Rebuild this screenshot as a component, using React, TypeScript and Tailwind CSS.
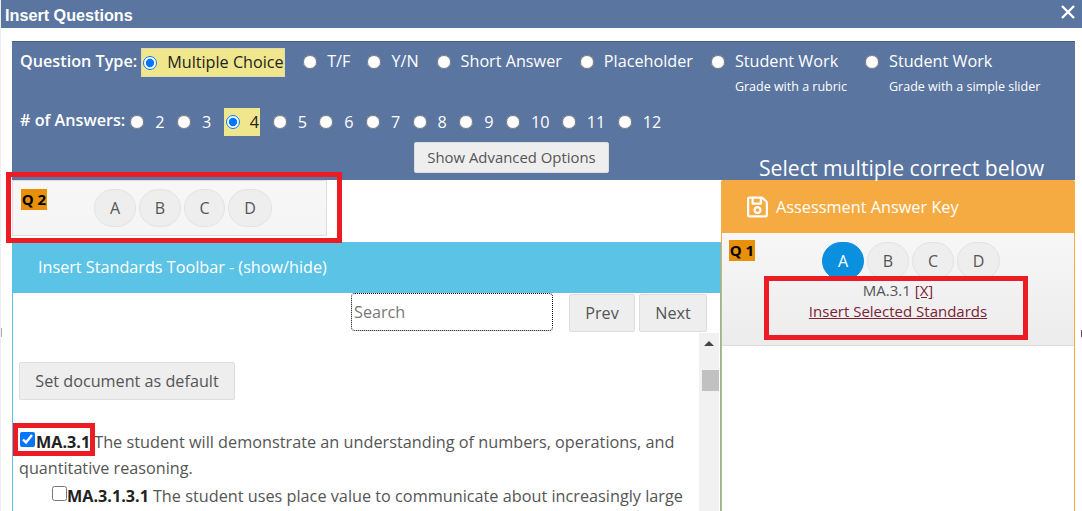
import React from "react";
import { FaRegSave } from "react-icons/fa";

const answerCounts = ["2", "3", "4", "5", "6", "7", "8", "9", "10", "11", "12"];
const letters = ["A", "B", "C", "D"];

function Radio({ checked, name }: { checked?: boolean; name: string }) {
  return (
    <input
      type="radio"
      name={name}
      defaultChecked={checked}
      className="m-0 w-[14px] h-[14px] shrink-0"
    />
  );
}

function TypeOption({
  label,
  sub,
  className,
}: {
  label: string;
  sub?: string;
  className: string;
}) {
  return (
    <div className={className}>
      <div className="flex items-center h-[29px]">
        <Radio name="qtype" />
        <span className="ml-[10px]">{label}</span>
      </div>
      {sub && <div className="ml-[24px] text-[12.5px] leading-[17px] mt-[2px]">{sub}</div>}
    </div>
  );
}

function LetterButtons({ active, widths }: { active?: string; widths: string[] }) {
  return (
    <div className="flex gap-[3px]">
      {letters.map((l, i) => (
        <div
          key={l}
          className={
            "h-[38px] rounded-full border flex items-center justify-center text-[16px] " +
            widths[i] +
            (l === active
              ? " bg-[#0b8fdf] border-[#0b8fdf] text-white"
              : " bg-[#eeeeee] border-[#e3e3e3] text-[#555]")
          }
        >
          {l}
        </div>
      ))}
    </div>
  );
}

function Badge({ text }: { text: string }) {
  return (
    <div className="bg-[#e8900a] text-black font-bold text-[15px] leading-[20px] h-[21px] w-[26px] text-center whitespace-nowrap">
      {text}
    </div>
  );
}

function GrayButton({ children, className }: { children: React.ReactNode; className: string }) {
  return (
    <div
      className={
        "bg-[#eeeeee] border border-[#dddddd] rounded-[2px] text-[#555] flex items-center justify-center " +
        className
      }
    >
      {children}
    </div>
  );
}

function RedBox({ className }: { className: string }) {
  return <div className={"absolute border-[5px] border-[#ed1c24] pointer-events-none " + className} />;
}

export default function App() {
  return (
    <div
      className="relative h-[511px] w-[1082px] overflow-hidden flex flex-col bg-white border-l border-[#eeeeee]"
      style={{ fontFamily: '"Open Sans", sans-serif' }}
    >
      {/* title bar */}
      <div className="h-[28px] shrink-0 bg-[#5a759f] flex items-center justify-between pl-[4px] pr-[4px]">
        <span
          className="text-white font-bold text-[16.2px] pt-[2px]"
          style={{ fontFamily: '"Liberation Sans", sans-serif' }}
        >
          Insert Questions
        </span>
        <svg width="16" height="16" viewBox="0 0 16 16" className="mb-[5px] mr-[2px]">
          <path d="M2 2 L14 14 M14 2 L2 14" stroke="#fff" strokeWidth="2.4" />
        </svg>
      </div>

      <div className="flex-1 flex flex-col pt-[13px] pl-[11px] pr-[7px] min-h-0">
        {/* question options */}
        <div className="h-[139px] shrink-0 bg-[#5a759f] border-t border-[#4a5f80] text-white text-[16.2px] pl-[8px] relative">
          <div className="flex items-start pt-[6px] h-[66px]">
            <span className="font-semibold h-[27px] flex items-center">Question Type:</span>
            <div className="ml-[4px] w-[144px] h-[29px] bg-[#f0e68c] border border-[#e0dcae] text-[#222] flex items-center pl-[1px]">
              <Radio name="qtype" checked />
              <span className="ml-[10px] whitespace-nowrap">Multiple Choice</span>
            </div>
            <TypeOption label="T/F" className="ml-[18px] -mt-[1px]" />
            <TypeOption label="Y/N" className="ml-[17px] -mt-[1px]" />
            <TypeOption label="Short Answer" className="ml-[18px] -mt-[1px]" />
            <TypeOption label="Placeholder" className="ml-[18px] -mt-[1px]" />
            <TypeOption label="Student Work" sub="Grade with a rubric" className="ml-[18px] -mt-[1px]" />
            <TypeOption label="Student Work" sub="Grade with a simple slider" className="ml-[18px] -mt-[1px]" />
          </div>
          <div className="flex items-center h-[28px] mt-[0px]">
            <span className="font-semibold mb-[3px]">
              # of Answers:
            </span>
            <div className="ml-[5px] flex items-center">
              {answerCounts.map((n) =>
                n === "4" ? (
                  <div
                    key={n}
                    className="h-[28px] w-[36px] bg-[#f0e68c] text-[#222] flex items-center pl-[2px] mr-[13px]"
                  >
                    <Radio name="acount" checked />
                    <span className="ml-[10px]">{n}</span>
                  </div>
                ) : (
                  <div key={n} className="flex items-center mr-[12.4px]">
                    <Radio name="acount" />
                    <span className="ml-[11px]">{n}</span>
                  </div>
                )
              )}
            </div>
          </div>
          <div className="flex items-start mt-[6px]">
            <GrayButton className="ml-[394px] w-[195px] h-[31px] text-[14.9px]">
              Show Advanced Options
            </GrayButton>
            <div className="ml-[150px] text-[21.2px] leading-[28px] mt-[12px] whitespace-nowrap">
              Select multiple correct below
            </div>
          </div>
        </div>

        <div className="flex-1 flex min-h-0">
          {/* left column */}
          <div className="w-[709px] shrink-0 flex flex-col relative">
            <div className="w-[315px] h-[56px] bg-gradient-to-b from-[#f7f7f7] to-[#f5f5f5] border border-[#dddddd] flex items-start pt-[8px] pl-[8px]">
              <Badge text="Q 2" />
              <div className="ml-[47px]">
                <LetterButtons widths={["w-[42px]", "w-[42px]", "w-[41px]", "w-[44px]"]} />
              </div>
            </div>
            <RedBox className="left-[-6px] top-[-8px] w-[336px] h-[71px]" />

            <div className="mt-[6px] h-[51px] shrink-0 bg-[#5bc3e6] text-white text-[16.2px] flex items-center pl-[26px]">
              Insert Standards Toolbar - (show/hide)
            </div>

            <div className="flex-1 min-h-0 border-l border-r border-[#5bc3e6] flex flex-col">
              <div className="h-[40px] shrink-0 flex items-start pl-[338px] text-[16.2px]">
                <div className="w-[202px] h-[38px] border border-dotted border-black rounded-[4px] text-[#777] flex items-center pl-[2px]">
                  Search
                </div>
                <GrayButton className="ml-[16px] mt-[1px] w-[66px] h-[38px]">Prev</GrayButton>
                <GrayButton className="ml-[4px] mt-[1px] w-[68px] h-[38px]">Next</GrayButton>
              </div>

              <div className="flex-1 min-h-0 flex overflow-hidden">
                <div className="w-[686px] shrink-0 text-[16.2px] text-[#555] pl-[6px] pt-[29px]">
                  <GrayButton className="w-[216px] h-[38px]">Set document as default</GrayButton>
                  <div className="relative mt-[29px] leading-[26px]">
                    <div className="whitespace-nowrap">
                      <input
                        type="checkbox"
                        defaultChecked
                        className="m-0 w-[15px] h-[15px] ml-[1px] mr-[1px] align-[1px]"
                      />
                      <b className="text-[#222]">MA.3.1</b>
                      <span className="ml-[4px] text-[16.26px]">
                        The student will demonstrate an understanding of numbers, operations, and
                      </span>
                    </div>
                    <div>quantitative reasoning.</div>
                    <RedBox className="left-[-6px] top-[-6px] w-[82px] h-[33px]" />
                  </div>
                  <div className="pl-[33px] leading-[28px] whitespace-nowrap mt-[1px]">
                    <input type="checkbox" className="m-0 w-[15px] h-[15px] align-[1px]" />
                    <b className="text-[#222]">MA.3.1.3.1</b>
                    <span className="ml-[4px] text-[16.26px]">
                      The student uses place value to communicate about increasingly large
                    </span>
                  </div>
                </div>
                <div className="w-[20px] shrink-0 ml-[0px] bg-[#f1f1f1] flex flex-col items-end">
                  <div className="w-full flex justify-center pt-[8px]">
                    <div className="w-0 h-0 border-l-[5px] border-r-[5px] border-b-[5px] border-l-transparent border-r-transparent border-b-[#444]" />
                  </div>
                  <div className="w-[17px] h-[21px] bg-[#c1c1c1] mt-[24px]" />
                </div>
              </div>
            </div>
          </div>

          {/* right column */}
          <div className="flex-1 min-w-0 flex flex-col">
            <div className="h-[53px] shrink-0 bg-[#f5ab42] rounded-t-[2px] text-white text-[16.3px] flex items-center pl-[25px]">
              <FaRegSave className="w-[23px] h-[24px]" />
              <span className="ml-[7px] pt-[1px]">Assessment Answer Key</span>
            </div>
            <div className="flex-1 min-h-0 border-l border-r border-[#f5ab42]">
              <div className="h-[113px] relative bg-gradient-to-b from-[#f7f7f7] to-[#ececec] border-b border-[#dddddd] pt-[7px] pl-[7px]">
                <div className="flex items-start">
                  <Badge text="Q 1" />
                  <div className="ml-[67px] mt-[2px]">
                    <LetterButtons active="A" widths={["w-[42px]", "w-[42px]", "w-[42px]", "w-[43px]"]} />
                  </div>
                </div>
                <div className="absolute top-[47px] inset-x-0 text-center text-[15px] leading-[21px] text-[#555]">
                  <div>
                    MA.3.1 <span className="underline text-[#7c2236]">[X]</span>
                  </div>
                  <div className="underline text-[#7c2236]">Insert Selected Standards</div>
                </div>
                <RedBox className="left-[42px] top-[43px] w-[264px] h-[64px]" />
              </div>
            </div>
          </div>
        </div>
      </div>

      {/* resize handles on the dialog edges */}
      <div className="absolute left-0 top-[328px] w-[1px] h-[9px] bg-[#aaaaaa]" />
      <div className="absolute right-0 top-[330px] w-[1px] h-[7px] bg-[#555555]" />
    </div>
  );
}
